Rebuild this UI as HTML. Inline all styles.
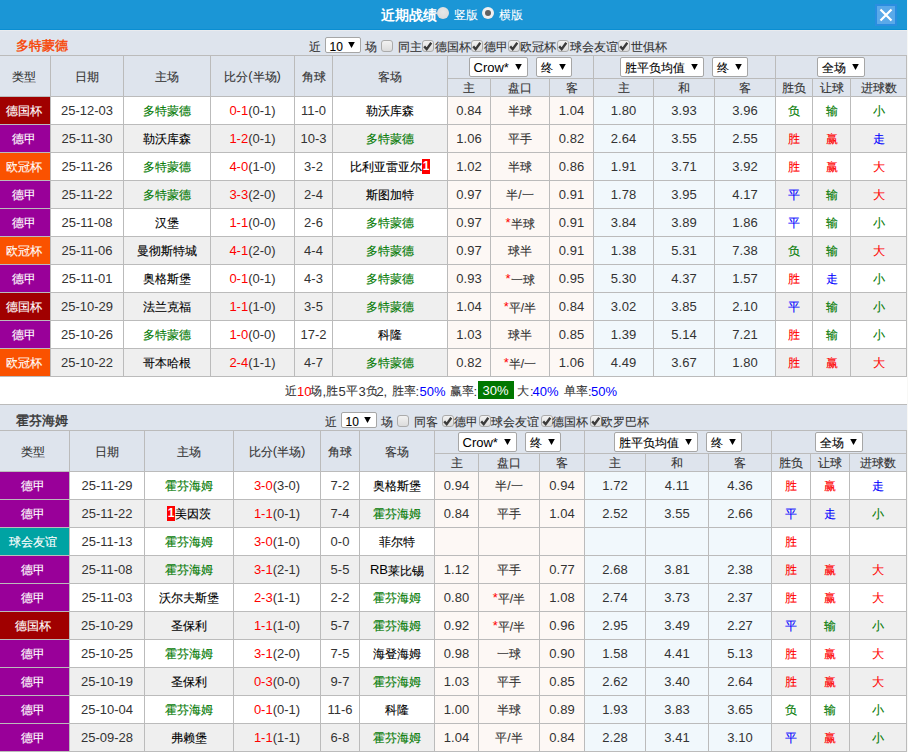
<!DOCTYPE html><html><head><meta charset="utf-8"><style>
*{margin:0;padding:0;box-sizing:border-box}
html,body{width:908px;height:752px;overflow:hidden;background:#dee4ed;font-family:"Liberation Sans",sans-serif;font-size:12px;color:#333;-webkit-text-stroke:0.1px currentColor}
.a{position:absolute}
.c{position:absolute;text-align:center;white-space:nowrap;overflow:hidden;padding-top:1px;-webkit-text-stroke:0.12px currentColor}
.n{font-size:13px;position:relative;top:-1px;-webkit-text-stroke:0}
.t,.ft{position:absolute;white-space:nowrap;line-height:14px;color:#333}
.title{-webkit-text-stroke:0.4px currentColor;position:absolute;font-size:13px;font-weight:normal;line-height:16px;white-space:nowrap}
.hdr{-webkit-text-stroke:0;position:absolute;color:#fff;font-size:14px;font-weight:bold;line-height:18px;white-space:nowrap}
.hdr2{position:absolute;color:#fff;font-size:12px;line-height:16px;white-space:nowrap}
.radio{position:absolute;width:12px;height:12px;border-radius:50%;background:radial-gradient(circle at 50% 40%,#e8e8e8 0,#dddddd 70%,#c0bab4 100%)}
.radio.on{background:radial-gradient(circle at 50% 45%,#f6f6f6 0,#eeeeee 65%,#c4c0bc 100%)}
.radio.on::after{content:"";position:absolute;left:3px;top:2.8px;width:6px;height:6px;border-radius:50%;background:#606060}
.close{position:absolute;width:22px;height:22px}
.cb{position:absolute;width:12px;height:12px;border:1px solid #ababab;border-radius:3px;background:linear-gradient(#f2f2f2,#dcdcdc)}
.cb svg{left:-1px!important;top:-1px!important}
.sel{position:absolute;background:#fff;border:1px solid #a6a6a6;border-radius:2px;color:#000}
.st{position:absolute;top:0;white-space:nowrap}
.st .n{font-size:13px;top:0}
.tri{position:absolute;line-height:0}
.bdg{display:inline-block;background:#f00;color:#fff;width:8px;height:15px;line-height:15px;font-weight:bold;text-align:center;vertical-align:middle;position:relative;top:-1px;-webkit-text-stroke:0}
.bdg .n{font-size:12px;top:0}
.sp{position:absolute;height:27px;line-height:27px;white-space:nowrap}
.sum{position:absolute;text-align:center;color:#333;white-space:nowrap}
.bl{color:#0000ff}
.gbox{display:inline-block;background:#007700;color:#fff;padding:0 4px;line-height:18px}
.gbox .n{font-size:14px}
</style></head><body><div class="a" style="left:0px;top:0px;width:907px;height:29px;background:#1b96d6;"></div>
<div class="a" style="left:0px;top:29px;width:907px;height:1px;background:#0a8ed2;"></div>
<div class="a" style="left:0px;top:30px;width:907px;height:1px;background:#e9ebef;"></div>
<div class="hdr" style="left:381px;top:6px;">近期战绩</div>
<div class="radio" style="left:437px;top:7px"></div>
<div class="hdr2" style="left:454px;top:7px;">竖版</div>
<div class="radio on" style="left:482px;top:7px"></div>
<div class="hdr2" style="left:499px;top:7px;">横版</div>
<div class="close" style="left:875px;top:4px"><svg width="22" height="22" viewBox="0 0 22 22"><rect x="0" y="0" width="22" height="22" fill="#2a8de0"/><rect x="2" y="2" width="18" height="18" fill="#5aa9e9"/><path d="M5.5 5.5 L16.5 16.5 M16.5 5.5 L5.5 16.5" stroke="#fff" stroke-width="2.2"/></svg></div>
<div class="title" style="left:16px;top:38px;color:#f84200">多特蒙德</div>
<div class="ft" style="left:309px;top:40px;">近</div>
<div class="sel" style="left:325px;top:37px;width:36px;height:16px;"><div class="st" style="left:3.5px;top:1.5px;line-height:14px;font-size:12px">10</div><div class="tri" style="right:5px;top:4px"><svg width="7" height="6" viewBox="0 0 7 6"><path d="M0.2 0 L6.8 0 L3.5 6 Z" fill="#000"/></svg></div></div>
<div class="ft" style="left:365px;top:40px;">场</div>
<div class="cb" style="left:381px;top:40px"></div>
<div class="ft" style="left:398px;top:40px;">同主</div>
<div class="cb" style="left:422px;top:40px"><svg width="12" height="12" viewBox="0 0 12 12" style="position:absolute;left:0;top:0"><path d="M2.2 6.4 L4.7 9.2 L9.3 2.8" stroke="#3a3a3a" stroke-width="2.4" fill="none"/></svg></div>
<div class="ft" style="left:435px;top:40px;">德国杯</div>
<div class="cb" style="left:471px;top:40px"><svg width="12" height="12" viewBox="0 0 12 12" style="position:absolute;left:0;top:0"><path d="M2.2 6.4 L4.7 9.2 L9.3 2.8" stroke="#3a3a3a" stroke-width="2.4" fill="none"/></svg></div>
<div class="ft" style="left:484px;top:40px;">德甲</div>
<div class="cb" style="left:508px;top:40px"><svg width="12" height="12" viewBox="0 0 12 12" style="position:absolute;left:0;top:0"><path d="M2.2 6.4 L4.7 9.2 L9.3 2.8" stroke="#3a3a3a" stroke-width="2.4" fill="none"/></svg></div>
<div class="ft" style="left:520px;top:40px;">欧冠杯</div>
<div class="cb" style="left:557px;top:40px"><svg width="12" height="12" viewBox="0 0 12 12" style="position:absolute;left:0;top:0"><path d="M2.2 6.4 L4.7 9.2 L9.3 2.8" stroke="#3a3a3a" stroke-width="2.4" fill="none"/></svg></div>
<div class="ft" style="left:570px;top:40px;">球会友谊</div>
<div class="cb" style="left:618px;top:40px"><svg width="12" height="12" viewBox="0 0 12 12" style="position:absolute;left:0;top:0"><path d="M2.2 6.4 L4.7 9.2 L9.3 2.8" stroke="#3a3a3a" stroke-width="2.4" fill="none"/></svg></div>
<div class="ft" style="left:631px;top:40px;">世俱杯</div>
<div class="a" style="left:0px;top:55px;width:907px;height:322px;background:#bbbbbb;"></div>
<div class="c" style="left:0px;top:56px;width:50px;height:40px;line-height:40px;background:#dee4ed;color:#333;text-indent:-2px;">类型</div>
<div class="c" style="left:51px;top:56px;width:72px;height:40px;line-height:40px;background:#dee4ed;color:#333;">日期</div>
<div class="c" style="left:124px;top:56px;width:86px;height:40px;line-height:40px;background:#dee4ed;color:#333;">主场</div>
<div class="c" style="left:211px;top:56px;width:83px;height:40px;line-height:40px;background:#dee4ed;color:#333;">比分<span class="n">(</span>半场<span class="n">)</span></div>
<div class="c" style="left:295px;top:56px;width:37px;height:40px;line-height:40px;background:#dee4ed;color:#333;">角球</div>
<div class="c" style="left:333px;top:56px;width:114px;height:40px;line-height:40px;background:#dee4ed;color:#333;">客场</div>
<div class="c" style="left:448px;top:56px;width:145px;height:22px;line-height:22px;background:#dee4ed;"></div>
<div class="c" style="left:594px;top:56px;width:181px;height:22px;line-height:22px;background:#dee4ed;"></div>
<div class="c" style="left:776px;top:56px;width:130px;height:22px;line-height:22px;background:#dee4ed;"></div>
<div class="sel" style="left:469px;top:57px;width:59px;height:20px;"><div class="st" style="left:3.5px;top:1px;line-height:18px;font-size:12px"><span class="n">Crow*</span></div><div class="tri" style="right:5px;top:6px"><svg width="7" height="6" viewBox="0 0 7 6"><path d="M0.2 0 L6.8 0 L3.5 6 Z" fill="#000"/></svg></div></div>
<div class="sel" style="left:536px;top:57px;width:36px;height:20px;"><div class="st" style="left:3.5px;top:1px;line-height:18px;font-size:12px">终</div><div class="tri" style="right:5px;top:6px"><svg width="7" height="6" viewBox="0 0 7 6"><path d="M0.2 0 L6.8 0 L3.5 6 Z" fill="#000"/></svg></div></div>
<div class="sel" style="left:620px;top:57px;width:84px;height:20px;"><div class="st" style="left:3.5px;top:1px;line-height:18px;font-size:12px">胜平负均值</div><div class="tri" style="right:5px;top:6px"><svg width="7" height="6" viewBox="0 0 7 6"><path d="M0.2 0 L6.8 0 L3.5 6 Z" fill="#000"/></svg></div></div>
<div class="sel" style="left:712px;top:57px;width:36px;height:20px;"><div class="st" style="left:3.5px;top:1px;line-height:18px;font-size:12px">终</div><div class="tri" style="right:5px;top:6px"><svg width="7" height="6" viewBox="0 0 7 6"><path d="M0.2 0 L6.8 0 L3.5 6 Z" fill="#000"/></svg></div></div>
<div class="sel" style="left:817px;top:57px;width:48px;height:20px;"><div class="st" style="left:3.5px;top:1px;line-height:18px;font-size:12px">全场</div><div class="tri" style="right:5px;top:6px"><svg width="7" height="6" viewBox="0 0 7 6"><path d="M0.2 0 L6.8 0 L3.5 6 Z" fill="#000"/></svg></div></div>
<div class="c" style="left:448px;top:79px;width:42px;height:17px;line-height:17px;background:#dee4ed;color:#333;">主</div>
<div class="c" style="left:491px;top:79px;width:58px;height:17px;line-height:17px;background:#dee4ed;color:#333;">盘口</div>
<div class="c" style="left:550px;top:79px;width:43px;height:17px;line-height:17px;background:#dee4ed;color:#333;">客</div>
<div class="c" style="left:594px;top:79px;width:59px;height:17px;line-height:17px;background:#dee4ed;color:#333;">主</div>
<div class="c" style="left:654px;top:79px;width:60px;height:17px;line-height:17px;background:#dee4ed;color:#333;">和</div>
<div class="c" style="left:715px;top:79px;width:60px;height:17px;line-height:17px;background:#dee4ed;color:#333;">客</div>
<div class="c" style="left:776px;top:79px;width:36px;height:17px;line-height:17px;background:#dee4ed;color:#333;">胜负</div>
<div class="c" style="left:813px;top:79px;width:37px;height:17px;line-height:17px;background:#dee4ed;color:#333;">让球</div>
<div class="c" style="left:851px;top:79px;width:55px;height:17px;line-height:17px;background:#dee4ed;color:#333;">进球数</div>
<div class="c" style="left:0px;top:97px;width:50px;height:27px;line-height:27px;background:#a00000;color:#fff;text-indent:-2px;">德国杯</div>
<div class="c" style="left:51px;top:97px;width:72px;height:27px;line-height:27px;background:#ffffff;color:#333;"><span class="n">25-12-03</span></div>
<div class="c" style="left:124px;top:97px;width:86px;height:27px;line-height:27px;background:#ffffff;color:#000;"><span style="color:#007800">多特蒙德</span></div>
<div class="c" style="left:211px;top:97px;width:83px;height:27px;line-height:27px;background:#ffffff;color:#333;"><span style="color:#ff0000"><span class="n">0-1</span></span><span class="n">(0-1)</span></div>
<div class="c" style="left:295px;top:97px;width:37px;height:27px;line-height:27px;background:#ffffff;color:#333;"><span class="n">11-0</span></div>
<div class="c" style="left:333px;top:97px;width:114px;height:27px;line-height:27px;background:#ffffff;color:#000;">勒沃库森</div>
<div class="c" style="left:448px;top:97px;width:42px;height:27px;line-height:27px;background:#fdf8f5;color:#333;"><span class="n">0.84</span></div>
<div class="c" style="left:491px;top:97px;width:58px;height:27px;line-height:27px;background:#fdf8f5;color:#333;">半球</div>
<div class="c" style="left:550px;top:97px;width:43px;height:27px;line-height:27px;background:#fdf8f5;color:#333;"><span class="n">1.04</span></div>
<div class="c" style="left:594px;top:97px;width:59px;height:27px;line-height:27px;background:#f1f8fc;color:#333;"><span class="n">1.80</span></div>
<div class="c" style="left:654px;top:97px;width:60px;height:27px;line-height:27px;background:#f1f8fc;color:#333;"><span class="n">3.93</span></div>
<div class="c" style="left:715px;top:97px;width:60px;height:27px;line-height:27px;background:#f1f8fc;color:#333;"><span class="n">3.96</span></div>
<div class="c" style="left:776px;top:97px;width:36px;height:27px;line-height:27px;background:#ffffff;"><span style="color:#007800">负</span></div>
<div class="c" style="left:813px;top:97px;width:37px;height:27px;line-height:27px;background:#ffffff;"><span style="color:#007800">输</span></div>
<div class="c" style="left:851px;top:97px;width:55px;height:27px;line-height:27px;background:#ffffff;"><span style="color:#007800">小</span></div>
<div class="c" style="left:0px;top:125px;width:50px;height:27px;line-height:27px;background:#990099;color:#fff;text-indent:-2px;">德甲</div>
<div class="c" style="left:51px;top:125px;width:72px;height:27px;line-height:27px;background:#efefef;color:#333;"><span class="n">25-11-30</span></div>
<div class="c" style="left:124px;top:125px;width:86px;height:27px;line-height:27px;background:#efefef;color:#000;">勒沃库森</div>
<div class="c" style="left:211px;top:125px;width:83px;height:27px;line-height:27px;background:#efefef;color:#333;"><span style="color:#ff0000"><span class="n">1-2</span></span><span class="n">(0-1)</span></div>
<div class="c" style="left:295px;top:125px;width:37px;height:27px;line-height:27px;background:#efefef;color:#333;"><span class="n">10-3</span></div>
<div class="c" style="left:333px;top:125px;width:114px;height:27px;line-height:27px;background:#efefef;color:#000;"><span style="color:#007800">多特蒙德</span></div>
<div class="c" style="left:448px;top:125px;width:42px;height:27px;line-height:27px;background:#fdf8f5;color:#333;"><span class="n">1.06</span></div>
<div class="c" style="left:491px;top:125px;width:58px;height:27px;line-height:27px;background:#fdf8f5;color:#333;">平手</div>
<div class="c" style="left:550px;top:125px;width:43px;height:27px;line-height:27px;background:#fdf8f5;color:#333;"><span class="n">0.82</span></div>
<div class="c" style="left:594px;top:125px;width:59px;height:27px;line-height:27px;background:#f1f8fc;color:#333;"><span class="n">2.64</span></div>
<div class="c" style="left:654px;top:125px;width:60px;height:27px;line-height:27px;background:#f1f8fc;color:#333;"><span class="n">3.55</span></div>
<div class="c" style="left:715px;top:125px;width:60px;height:27px;line-height:27px;background:#f1f8fc;color:#333;"><span class="n">2.55</span></div>
<div class="c" style="left:776px;top:125px;width:36px;height:27px;line-height:27px;background:#efefef;"><span style="color:#ff0000">胜</span></div>
<div class="c" style="left:813px;top:125px;width:37px;height:27px;line-height:27px;background:#efefef;"><span style="color:#ff0000">赢</span></div>
<div class="c" style="left:851px;top:125px;width:55px;height:27px;line-height:27px;background:#efefef;"><span style="color:#0000ff">走</span></div>
<div class="c" style="left:0px;top:153px;width:50px;height:27px;line-height:27px;background:#fa5200;color:#fff;text-indent:-2px;">欧冠杯</div>
<div class="c" style="left:51px;top:153px;width:72px;height:27px;line-height:27px;background:#ffffff;color:#333;"><span class="n">25-11-26</span></div>
<div class="c" style="left:124px;top:153px;width:86px;height:27px;line-height:27px;background:#ffffff;color:#000;"><span style="color:#007800">多特蒙德</span></div>
<div class="c" style="left:211px;top:153px;width:83px;height:27px;line-height:27px;background:#ffffff;color:#333;"><span style="color:#ff0000"><span class="n">4-0</span></span><span class="n">(1-0)</span></div>
<div class="c" style="left:295px;top:153px;width:37px;height:27px;line-height:27px;background:#ffffff;color:#333;"><span class="n">3-2</span></div>
<div class="c" style="left:333px;top:153px;width:114px;height:27px;line-height:27px;background:#ffffff;color:#000;">比利亚雷亚尔<span class="bdg"><span class="n">1</span></span></div>
<div class="c" style="left:448px;top:153px;width:42px;height:27px;line-height:27px;background:#fdf8f5;color:#333;"><span class="n">1.02</span></div>
<div class="c" style="left:491px;top:153px;width:58px;height:27px;line-height:27px;background:#fdf8f5;color:#333;">半球</div>
<div class="c" style="left:550px;top:153px;width:43px;height:27px;line-height:27px;background:#fdf8f5;color:#333;"><span class="n">0.86</span></div>
<div class="c" style="left:594px;top:153px;width:59px;height:27px;line-height:27px;background:#f1f8fc;color:#333;"><span class="n">1.91</span></div>
<div class="c" style="left:654px;top:153px;width:60px;height:27px;line-height:27px;background:#f1f8fc;color:#333;"><span class="n">3.71</span></div>
<div class="c" style="left:715px;top:153px;width:60px;height:27px;line-height:27px;background:#f1f8fc;color:#333;"><span class="n">3.92</span></div>
<div class="c" style="left:776px;top:153px;width:36px;height:27px;line-height:27px;background:#ffffff;"><span style="color:#ff0000">胜</span></div>
<div class="c" style="left:813px;top:153px;width:37px;height:27px;line-height:27px;background:#ffffff;"><span style="color:#ff0000">赢</span></div>
<div class="c" style="left:851px;top:153px;width:55px;height:27px;line-height:27px;background:#ffffff;"><span style="color:#ff0000">大</span></div>
<div class="c" style="left:0px;top:181px;width:50px;height:27px;line-height:27px;background:#990099;color:#fff;text-indent:-2px;">德甲</div>
<div class="c" style="left:51px;top:181px;width:72px;height:27px;line-height:27px;background:#efefef;color:#333;"><span class="n">25-11-22</span></div>
<div class="c" style="left:124px;top:181px;width:86px;height:27px;line-height:27px;background:#efefef;color:#000;"><span style="color:#007800">多特蒙德</span></div>
<div class="c" style="left:211px;top:181px;width:83px;height:27px;line-height:27px;background:#efefef;color:#333;"><span style="color:#ff0000"><span class="n">3-3</span></span><span class="n">(2-0)</span></div>
<div class="c" style="left:295px;top:181px;width:37px;height:27px;line-height:27px;background:#efefef;color:#333;"><span class="n">2-4</span></div>
<div class="c" style="left:333px;top:181px;width:114px;height:27px;line-height:27px;background:#efefef;color:#000;">斯图加特</div>
<div class="c" style="left:448px;top:181px;width:42px;height:27px;line-height:27px;background:#fdf8f5;color:#333;"><span class="n">0.97</span></div>
<div class="c" style="left:491px;top:181px;width:58px;height:27px;line-height:27px;background:#fdf8f5;color:#333;">半/一</div>
<div class="c" style="left:550px;top:181px;width:43px;height:27px;line-height:27px;background:#fdf8f5;color:#333;"><span class="n">0.91</span></div>
<div class="c" style="left:594px;top:181px;width:59px;height:27px;line-height:27px;background:#f1f8fc;color:#333;"><span class="n">1.78</span></div>
<div class="c" style="left:654px;top:181px;width:60px;height:27px;line-height:27px;background:#f1f8fc;color:#333;"><span class="n">3.95</span></div>
<div class="c" style="left:715px;top:181px;width:60px;height:27px;line-height:27px;background:#f1f8fc;color:#333;"><span class="n">4.17</span></div>
<div class="c" style="left:776px;top:181px;width:36px;height:27px;line-height:27px;background:#efefef;"><span style="color:#0000ff">平</span></div>
<div class="c" style="left:813px;top:181px;width:37px;height:27px;line-height:27px;background:#efefef;"><span style="color:#007800">输</span></div>
<div class="c" style="left:851px;top:181px;width:55px;height:27px;line-height:27px;background:#efefef;"><span style="color:#ff0000">大</span></div>
<div class="c" style="left:0px;top:209px;width:50px;height:27px;line-height:27px;background:#990099;color:#fff;text-indent:-2px;">德甲</div>
<div class="c" style="left:51px;top:209px;width:72px;height:27px;line-height:27px;background:#ffffff;color:#333;"><span class="n">25-11-08</span></div>
<div class="c" style="left:124px;top:209px;width:86px;height:27px;line-height:27px;background:#ffffff;color:#000;">汉堡</div>
<div class="c" style="left:211px;top:209px;width:83px;height:27px;line-height:27px;background:#ffffff;color:#333;"><span style="color:#ff0000"><span class="n">1-1</span></span><span class="n">(0-0)</span></div>
<div class="c" style="left:295px;top:209px;width:37px;height:27px;line-height:27px;background:#ffffff;color:#333;"><span class="n">2-6</span></div>
<div class="c" style="left:333px;top:209px;width:114px;height:27px;line-height:27px;background:#ffffff;color:#000;"><span style="color:#007800">多特蒙德</span></div>
<div class="c" style="left:448px;top:209px;width:42px;height:27px;line-height:27px;background:#fdf8f5;color:#333;"><span class="n">0.97</span></div>
<div class="c" style="left:491px;top:209px;width:58px;height:27px;line-height:27px;background:#fdf8f5;color:#333;"><span style="color:#ff0000"><span class="n">*</span></span>半球</div>
<div class="c" style="left:550px;top:209px;width:43px;height:27px;line-height:27px;background:#fdf8f5;color:#333;"><span class="n">0.91</span></div>
<div class="c" style="left:594px;top:209px;width:59px;height:27px;line-height:27px;background:#f1f8fc;color:#333;"><span class="n">3.84</span></div>
<div class="c" style="left:654px;top:209px;width:60px;height:27px;line-height:27px;background:#f1f8fc;color:#333;"><span class="n">3.89</span></div>
<div class="c" style="left:715px;top:209px;width:60px;height:27px;line-height:27px;background:#f1f8fc;color:#333;"><span class="n">1.86</span></div>
<div class="c" style="left:776px;top:209px;width:36px;height:27px;line-height:27px;background:#ffffff;"><span style="color:#0000ff">平</span></div>
<div class="c" style="left:813px;top:209px;width:37px;height:27px;line-height:27px;background:#ffffff;"><span style="color:#007800">输</span></div>
<div class="c" style="left:851px;top:209px;width:55px;height:27px;line-height:27px;background:#ffffff;"><span style="color:#007800">小</span></div>
<div class="c" style="left:0px;top:237px;width:50px;height:27px;line-height:27px;background:#fa5200;color:#fff;text-indent:-2px;">欧冠杯</div>
<div class="c" style="left:51px;top:237px;width:72px;height:27px;line-height:27px;background:#efefef;color:#333;"><span class="n">25-11-06</span></div>
<div class="c" style="left:124px;top:237px;width:86px;height:27px;line-height:27px;background:#efefef;color:#000;">曼彻斯特城</div>
<div class="c" style="left:211px;top:237px;width:83px;height:27px;line-height:27px;background:#efefef;color:#333;"><span style="color:#ff0000"><span class="n">4-1</span></span><span class="n">(2-0)</span></div>
<div class="c" style="left:295px;top:237px;width:37px;height:27px;line-height:27px;background:#efefef;color:#333;"><span class="n">4-4</span></div>
<div class="c" style="left:333px;top:237px;width:114px;height:27px;line-height:27px;background:#efefef;color:#000;"><span style="color:#007800">多特蒙德</span></div>
<div class="c" style="left:448px;top:237px;width:42px;height:27px;line-height:27px;background:#fdf8f5;color:#333;"><span class="n">0.97</span></div>
<div class="c" style="left:491px;top:237px;width:58px;height:27px;line-height:27px;background:#fdf8f5;color:#333;">球半</div>
<div class="c" style="left:550px;top:237px;width:43px;height:27px;line-height:27px;background:#fdf8f5;color:#333;"><span class="n">0.91</span></div>
<div class="c" style="left:594px;top:237px;width:59px;height:27px;line-height:27px;background:#f1f8fc;color:#333;"><span class="n">1.38</span></div>
<div class="c" style="left:654px;top:237px;width:60px;height:27px;line-height:27px;background:#f1f8fc;color:#333;"><span class="n">5.31</span></div>
<div class="c" style="left:715px;top:237px;width:60px;height:27px;line-height:27px;background:#f1f8fc;color:#333;"><span class="n">7.38</span></div>
<div class="c" style="left:776px;top:237px;width:36px;height:27px;line-height:27px;background:#efefef;"><span style="color:#007800">负</span></div>
<div class="c" style="left:813px;top:237px;width:37px;height:27px;line-height:27px;background:#efefef;"><span style="color:#007800">输</span></div>
<div class="c" style="left:851px;top:237px;width:55px;height:27px;line-height:27px;background:#efefef;"><span style="color:#ff0000">大</span></div>
<div class="c" style="left:0px;top:265px;width:50px;height:27px;line-height:27px;background:#990099;color:#fff;text-indent:-2px;">德甲</div>
<div class="c" style="left:51px;top:265px;width:72px;height:27px;line-height:27px;background:#ffffff;color:#333;"><span class="n">25-11-01</span></div>
<div class="c" style="left:124px;top:265px;width:86px;height:27px;line-height:27px;background:#ffffff;color:#000;">奥格斯堡</div>
<div class="c" style="left:211px;top:265px;width:83px;height:27px;line-height:27px;background:#ffffff;color:#333;"><span style="color:#ff0000"><span class="n">0-1</span></span><span class="n">(0-1)</span></div>
<div class="c" style="left:295px;top:265px;width:37px;height:27px;line-height:27px;background:#ffffff;color:#333;"><span class="n">4-3</span></div>
<div class="c" style="left:333px;top:265px;width:114px;height:27px;line-height:27px;background:#ffffff;color:#000;"><span style="color:#007800">多特蒙德</span></div>
<div class="c" style="left:448px;top:265px;width:42px;height:27px;line-height:27px;background:#fdf8f5;color:#333;"><span class="n">0.93</span></div>
<div class="c" style="left:491px;top:265px;width:58px;height:27px;line-height:27px;background:#fdf8f5;color:#333;"><span style="color:#ff0000"><span class="n">*</span></span>一球</div>
<div class="c" style="left:550px;top:265px;width:43px;height:27px;line-height:27px;background:#fdf8f5;color:#333;"><span class="n">0.95</span></div>
<div class="c" style="left:594px;top:265px;width:59px;height:27px;line-height:27px;background:#f1f8fc;color:#333;"><span class="n">5.30</span></div>
<div class="c" style="left:654px;top:265px;width:60px;height:27px;line-height:27px;background:#f1f8fc;color:#333;"><span class="n">4.37</span></div>
<div class="c" style="left:715px;top:265px;width:60px;height:27px;line-height:27px;background:#f1f8fc;color:#333;"><span class="n">1.57</span></div>
<div class="c" style="left:776px;top:265px;width:36px;height:27px;line-height:27px;background:#ffffff;"><span style="color:#ff0000">胜</span></div>
<div class="c" style="left:813px;top:265px;width:37px;height:27px;line-height:27px;background:#ffffff;"><span style="color:#0000ff">走</span></div>
<div class="c" style="left:851px;top:265px;width:55px;height:27px;line-height:27px;background:#ffffff;"><span style="color:#007800">小</span></div>
<div class="c" style="left:0px;top:293px;width:50px;height:27px;line-height:27px;background:#a00000;color:#fff;text-indent:-2px;">德国杯</div>
<div class="c" style="left:51px;top:293px;width:72px;height:27px;line-height:27px;background:#efefef;color:#333;"><span class="n">25-10-29</span></div>
<div class="c" style="left:124px;top:293px;width:86px;height:27px;line-height:27px;background:#efefef;color:#000;">法兰克福</div>
<div class="c" style="left:211px;top:293px;width:83px;height:27px;line-height:27px;background:#efefef;color:#333;"><span style="color:#ff0000"><span class="n">1-1</span></span><span class="n">(1-0)</span></div>
<div class="c" style="left:295px;top:293px;width:37px;height:27px;line-height:27px;background:#efefef;color:#333;"><span class="n">3-5</span></div>
<div class="c" style="left:333px;top:293px;width:114px;height:27px;line-height:27px;background:#efefef;color:#000;"><span style="color:#007800">多特蒙德</span></div>
<div class="c" style="left:448px;top:293px;width:42px;height:27px;line-height:27px;background:#fdf8f5;color:#333;"><span class="n">1.04</span></div>
<div class="c" style="left:491px;top:293px;width:58px;height:27px;line-height:27px;background:#fdf8f5;color:#333;"><span style="color:#ff0000"><span class="n">*</span></span>平/半</div>
<div class="c" style="left:550px;top:293px;width:43px;height:27px;line-height:27px;background:#fdf8f5;color:#333;"><span class="n">0.84</span></div>
<div class="c" style="left:594px;top:293px;width:59px;height:27px;line-height:27px;background:#f1f8fc;color:#333;"><span class="n">3.02</span></div>
<div class="c" style="left:654px;top:293px;width:60px;height:27px;line-height:27px;background:#f1f8fc;color:#333;"><span class="n">3.85</span></div>
<div class="c" style="left:715px;top:293px;width:60px;height:27px;line-height:27px;background:#f1f8fc;color:#333;"><span class="n">2.10</span></div>
<div class="c" style="left:776px;top:293px;width:36px;height:27px;line-height:27px;background:#efefef;"><span style="color:#0000ff">平</span></div>
<div class="c" style="left:813px;top:293px;width:37px;height:27px;line-height:27px;background:#efefef;"><span style="color:#007800">输</span></div>
<div class="c" style="left:851px;top:293px;width:55px;height:27px;line-height:27px;background:#efefef;"><span style="color:#007800">小</span></div>
<div class="c" style="left:0px;top:321px;width:50px;height:27px;line-height:27px;background:#990099;color:#fff;text-indent:-2px;">德甲</div>
<div class="c" style="left:51px;top:321px;width:72px;height:27px;line-height:27px;background:#ffffff;color:#333;"><span class="n">25-10-26</span></div>
<div class="c" style="left:124px;top:321px;width:86px;height:27px;line-height:27px;background:#ffffff;color:#000;"><span style="color:#007800">多特蒙德</span></div>
<div class="c" style="left:211px;top:321px;width:83px;height:27px;line-height:27px;background:#ffffff;color:#333;"><span style="color:#ff0000"><span class="n">1-0</span></span><span class="n">(0-0)</span></div>
<div class="c" style="left:295px;top:321px;width:37px;height:27px;line-height:27px;background:#ffffff;color:#333;"><span class="n">17-2</span></div>
<div class="c" style="left:333px;top:321px;width:114px;height:27px;line-height:27px;background:#ffffff;color:#000;">科隆</div>
<div class="c" style="left:448px;top:321px;width:42px;height:27px;line-height:27px;background:#fdf8f5;color:#333;"><span class="n">1.03</span></div>
<div class="c" style="left:491px;top:321px;width:58px;height:27px;line-height:27px;background:#fdf8f5;color:#333;">球半</div>
<div class="c" style="left:550px;top:321px;width:43px;height:27px;line-height:27px;background:#fdf8f5;color:#333;"><span class="n">0.85</span></div>
<div class="c" style="left:594px;top:321px;width:59px;height:27px;line-height:27px;background:#f1f8fc;color:#333;"><span class="n">1.39</span></div>
<div class="c" style="left:654px;top:321px;width:60px;height:27px;line-height:27px;background:#f1f8fc;color:#333;"><span class="n">5.14</span></div>
<div class="c" style="left:715px;top:321px;width:60px;height:27px;line-height:27px;background:#f1f8fc;color:#333;"><span class="n">7.21</span></div>
<div class="c" style="left:776px;top:321px;width:36px;height:27px;line-height:27px;background:#ffffff;"><span style="color:#ff0000">胜</span></div>
<div class="c" style="left:813px;top:321px;width:37px;height:27px;line-height:27px;background:#ffffff;"><span style="color:#007800">输</span></div>
<div class="c" style="left:851px;top:321px;width:55px;height:27px;line-height:27px;background:#ffffff;"><span style="color:#007800">小</span></div>
<div class="c" style="left:0px;top:349px;width:50px;height:27px;line-height:27px;background:#fa5200;color:#fff;text-indent:-2px;">欧冠杯</div>
<div class="c" style="left:51px;top:349px;width:72px;height:27px;line-height:27px;background:#efefef;color:#333;"><span class="n">25-10-22</span></div>
<div class="c" style="left:124px;top:349px;width:86px;height:27px;line-height:27px;background:#efefef;color:#000;">哥本哈根</div>
<div class="c" style="left:211px;top:349px;width:83px;height:27px;line-height:27px;background:#efefef;color:#333;"><span style="color:#ff0000"><span class="n">2-4</span></span><span class="n">(1-1)</span></div>
<div class="c" style="left:295px;top:349px;width:37px;height:27px;line-height:27px;background:#efefef;color:#333;"><span class="n">4-7</span></div>
<div class="c" style="left:333px;top:349px;width:114px;height:27px;line-height:27px;background:#efefef;color:#000;"><span style="color:#007800">多特蒙德</span></div>
<div class="c" style="left:448px;top:349px;width:42px;height:27px;line-height:27px;background:#fdf8f5;color:#333;"><span class="n">0.82</span></div>
<div class="c" style="left:491px;top:349px;width:58px;height:27px;line-height:27px;background:#fdf8f5;color:#333;"><span style="color:#ff0000"><span class="n">*</span></span>半/一</div>
<div class="c" style="left:550px;top:349px;width:43px;height:27px;line-height:27px;background:#fdf8f5;color:#333;"><span class="n">1.06</span></div>
<div class="c" style="left:594px;top:349px;width:59px;height:27px;line-height:27px;background:#f1f8fc;color:#333;"><span class="n">4.49</span></div>
<div class="c" style="left:654px;top:349px;width:60px;height:27px;line-height:27px;background:#f1f8fc;color:#333;"><span class="n">3.67</span></div>
<div class="c" style="left:715px;top:349px;width:60px;height:27px;line-height:27px;background:#f1f8fc;color:#333;"><span class="n">1.80</span></div>
<div class="c" style="left:776px;top:349px;width:36px;height:27px;line-height:27px;background:#efefef;"><span style="color:#ff0000">胜</span></div>
<div class="c" style="left:813px;top:349px;width:37px;height:27px;line-height:27px;background:#efefef;"><span style="color:#ff0000">赢</span></div>
<div class="c" style="left:851px;top:349px;width:55px;height:27px;line-height:27px;background:#efefef;"><span style="color:#ff0000">大</span></div>
<div class="a" style="left:0px;top:377px;width:907px;height:27px;background:#ffffff;"></div>
<div class="a" style="left:0px;top:404px;width:907px;height:1px;background:#bbbbbb;"></div>
<div class="sp" style="left:284.5px;top:378px;color:#333;font-size:12px;">近</div>
<div class="sp" style="left:297px;top:378px;color:#ff0000;font-size:13px;-webkit-text-stroke:0;">10</div>
<div class="sp" style="left:310px;top:378px;color:#333;font-size:12px;">场</div>
<div class="sp" style="left:322.5px;top:378px;color:#333;font-size:13px;-webkit-text-stroke:0;">,</div>
<div class="sp" style="left:326px;top:378px;color:#333;font-size:12px;">胜</div>
<div class="sp" style="left:338.5px;top:378px;color:#333;font-size:13px;-webkit-text-stroke:0;">5</div>
<div class="sp" style="left:345.5px;top:378px;color:#333;font-size:12px;">平</div>
<div class="sp" style="left:358.5px;top:378px;color:#333;font-size:13px;-webkit-text-stroke:0;">3</div>
<div class="sp" style="left:365.5px;top:378px;color:#333;font-size:12px;">负</div>
<div class="sp" style="left:376.5px;top:378px;color:#333;font-size:13px;-webkit-text-stroke:0;">2</div>
<div class="sp" style="left:383.5px;top:378px;color:#333;font-size:13px;-webkit-text-stroke:0;">,</div>
<div class="sp" style="left:391.5px;top:378px;color:#333;font-size:12px;">胜率</div>
<div class="sp" style="left:415.5px;top:378px;color:#333;font-size:13px;-webkit-text-stroke:0;">:</div>
<div class="sp" style="left:419.5px;top:378px;color:#0000ff;font-size:13px;-webkit-text-stroke:0;">50%</div>
<div class="sp" style="left:449.5px;top:378px;color:#333;font-size:12px;">赢率</div>
<div class="sp" style="left:473.5px;top:378px;color:#333;font-size:13px;-webkit-text-stroke:0;">:</div>
<div class="a" style="left:478px;top:381px;width:36px;height:18px;background:#007700;"></div>
<div class="sp" style="left:482.5px;top:377px;color:#fff;font-size:13px;-webkit-text-stroke:0">30%</div>
<div class="sp" style="left:517px;top:378px;color:#333;font-size:12px;">大</div>
<div class="sp" style="left:530px;top:378px;color:#333;font-size:13px;-webkit-text-stroke:0;">:</div>
<div class="sp" style="left:532.5px;top:378px;color:#0000ff;font-size:13px;-webkit-text-stroke:0;">40%</div>
<div class="sp" style="left:563.5px;top:378px;color:#333;font-size:12px;">单率</div>
<div class="sp" style="left:588px;top:378px;color:#333;font-size:13px;-webkit-text-stroke:0;">:</div>
<div class="sp" style="left:591px;top:378px;color:#0000ff;font-size:13px;-webkit-text-stroke:0;">50%</div>
<div class="a" style="left:907px;top:0px;width:1px;height:752px;background:#f8f8f6;"></div>
<div class="title" style="left:16px;top:413px;color:#333">霍芬海姆</div>
<div class="ft" style="left:325px;top:415px;">近</div>
<div class="sel" style="left:341px;top:412px;width:36px;height:16px;"><div class="st" style="left:3.5px;top:1.5px;line-height:14px;font-size:12px">10</div><div class="tri" style="right:5px;top:4px"><svg width="7" height="6" viewBox="0 0 7 6"><path d="M0.2 0 L6.8 0 L3.5 6 Z" fill="#000"/></svg></div></div>
<div class="ft" style="left:381px;top:415px;">场</div>
<div class="cb" style="left:397px;top:415px"></div>
<div class="ft" style="left:414px;top:415px;">同客</div>
<div class="cb" style="left:442px;top:415px"><svg width="12" height="12" viewBox="0 0 12 12" style="position:absolute;left:0;top:0"><path d="M2.2 6.4 L4.7 9.2 L9.3 2.8" stroke="#3a3a3a" stroke-width="2.4" fill="none"/></svg></div>
<div class="ft" style="left:454px;top:415px;">德甲</div>
<div class="cb" style="left:479px;top:415px"><svg width="12" height="12" viewBox="0 0 12 12" style="position:absolute;left:0;top:0"><path d="M2.2 6.4 L4.7 9.2 L9.3 2.8" stroke="#3a3a3a" stroke-width="2.4" fill="none"/></svg></div>
<div class="ft" style="left:491px;top:415px;">球会友谊</div>
<div class="cb" style="left:541px;top:415px"><svg width="12" height="12" viewBox="0 0 12 12" style="position:absolute;left:0;top:0"><path d="M2.2 6.4 L4.7 9.2 L9.3 2.8" stroke="#3a3a3a" stroke-width="2.4" fill="none"/></svg></div>
<div class="ft" style="left:552px;top:415px;">德国杯</div>
<div class="cb" style="left:590px;top:415px"><svg width="12" height="12" viewBox="0 0 12 12" style="position:absolute;left:0;top:0"><path d="M2.2 6.4 L4.7 9.2 L9.3 2.8" stroke="#3a3a3a" stroke-width="2.4" fill="none"/></svg></div>
<div class="ft" style="left:601px;top:415px;">欧罗巴杯</div>
<div class="a" style="left:0px;top:430px;width:907px;height:322px;background:#bbbbbb;"></div>
<div class="c" style="left:0px;top:431px;width:69px;height:40px;line-height:40px;background:#dee4ed;color:#333;text-indent:-4px;">类型</div>
<div class="c" style="left:70px;top:431px;width:74px;height:40px;line-height:40px;background:#dee4ed;color:#333;">日期</div>
<div class="c" style="left:145px;top:431px;width:88px;height:40px;line-height:40px;background:#dee4ed;color:#333;">主场</div>
<div class="c" style="left:234px;top:431px;width:86px;height:40px;line-height:40px;background:#dee4ed;color:#333;">比分<span class="n">(</span>半场<span class="n">)</span></div>
<div class="c" style="left:321px;top:431px;width:38px;height:40px;line-height:40px;background:#dee4ed;color:#333;">角球</div>
<div class="c" style="left:360px;top:431px;width:74px;height:40px;line-height:40px;background:#dee4ed;color:#333;">客场</div>
<div class="c" style="left:435px;top:431px;width:149px;height:22px;line-height:22px;background:#dee4ed;"></div>
<div class="c" style="left:585px;top:431px;width:186px;height:22px;line-height:22px;background:#dee4ed;"></div>
<div class="c" style="left:772px;top:431px;width:134px;height:22px;line-height:22px;background:#dee4ed;"></div>
<div class="sel" style="left:458px;top:432px;width:59px;height:20px;"><div class="st" style="left:3.5px;top:1px;line-height:18px;font-size:12px"><span class="n">Crow*</span></div><div class="tri" style="right:5px;top:6px"><svg width="7" height="6" viewBox="0 0 7 6"><path d="M0.2 0 L6.8 0 L3.5 6 Z" fill="#000"/></svg></div></div>
<div class="sel" style="left:525px;top:432px;width:36px;height:20px;"><div class="st" style="left:3.5px;top:1px;line-height:18px;font-size:12px">终</div><div class="tri" style="right:5px;top:6px"><svg width="7" height="6" viewBox="0 0 7 6"><path d="M0.2 0 L6.8 0 L3.5 6 Z" fill="#000"/></svg></div></div>
<div class="sel" style="left:614px;top:432px;width:84px;height:20px;"><div class="st" style="left:3.5px;top:1px;line-height:18px;font-size:12px">胜平负均值</div><div class="tri" style="right:5px;top:6px"><svg width="7" height="6" viewBox="0 0 7 6"><path d="M0.2 0 L6.8 0 L3.5 6 Z" fill="#000"/></svg></div></div>
<div class="sel" style="left:706px;top:432px;width:36px;height:20px;"><div class="st" style="left:3.5px;top:1px;line-height:18px;font-size:12px">终</div><div class="tri" style="right:5px;top:6px"><svg width="7" height="6" viewBox="0 0 7 6"><path d="M0.2 0 L6.8 0 L3.5 6 Z" fill="#000"/></svg></div></div>
<div class="sel" style="left:815px;top:432px;width:48px;height:20px;"><div class="st" style="left:3.5px;top:1px;line-height:18px;font-size:12px">全场</div><div class="tri" style="right:5px;top:6px"><svg width="7" height="6" viewBox="0 0 7 6"><path d="M0.2 0 L6.8 0 L3.5 6 Z" fill="#000"/></svg></div></div>
<div class="c" style="left:435px;top:454px;width:43px;height:17px;line-height:17px;background:#dee4ed;color:#333;">主</div>
<div class="c" style="left:479px;top:454px;width:60px;height:17px;line-height:17px;background:#dee4ed;color:#333;">盘口</div>
<div class="c" style="left:540px;top:454px;width:44px;height:17px;line-height:17px;background:#dee4ed;color:#333;">客</div>
<div class="c" style="left:585px;top:454px;width:60px;height:17px;line-height:17px;background:#dee4ed;color:#333;">主</div>
<div class="c" style="left:646px;top:454px;width:62px;height:17px;line-height:17px;background:#dee4ed;color:#333;">和</div>
<div class="c" style="left:709px;top:454px;width:62px;height:17px;line-height:17px;background:#dee4ed;color:#333;">客</div>
<div class="c" style="left:772px;top:454px;width:38px;height:17px;line-height:17px;background:#dee4ed;color:#333;">胜负</div>
<div class="c" style="left:811px;top:454px;width:38px;height:17px;line-height:17px;background:#dee4ed;color:#333;">让球</div>
<div class="c" style="left:850px;top:454px;width:56px;height:17px;line-height:17px;background:#dee4ed;color:#333;">进球数</div>
<div class="c" style="left:0px;top:472px;width:69px;height:27px;line-height:27px;background:#990099;color:#fff;text-indent:-4px;">德甲</div>
<div class="c" style="left:70px;top:472px;width:74px;height:27px;line-height:27px;background:#ffffff;color:#333;"><span class="n">25-11-29</span></div>
<div class="c" style="left:145px;top:472px;width:88px;height:27px;line-height:27px;background:#ffffff;color:#000;"><span style="color:#007800">霍芬海姆</span></div>
<div class="c" style="left:234px;top:472px;width:86px;height:27px;line-height:27px;background:#ffffff;color:#333;"><span style="color:#ff0000"><span class="n">3-0</span></span><span class="n">(3-0)</span></div>
<div class="c" style="left:321px;top:472px;width:38px;height:27px;line-height:27px;background:#ffffff;color:#333;"><span class="n">7-2</span></div>
<div class="c" style="left:360px;top:472px;width:74px;height:27px;line-height:27px;background:#ffffff;color:#000;">奥格斯堡</div>
<div class="c" style="left:435px;top:472px;width:43px;height:27px;line-height:27px;background:#fdf8f5;color:#333;"><span class="n">0.94</span></div>
<div class="c" style="left:479px;top:472px;width:60px;height:27px;line-height:27px;background:#fdf8f5;color:#333;">半/一</div>
<div class="c" style="left:540px;top:472px;width:44px;height:27px;line-height:27px;background:#fdf8f5;color:#333;"><span class="n">0.94</span></div>
<div class="c" style="left:585px;top:472px;width:60px;height:27px;line-height:27px;background:#f1f8fc;color:#333;"><span class="n">1.72</span></div>
<div class="c" style="left:646px;top:472px;width:62px;height:27px;line-height:27px;background:#f1f8fc;color:#333;"><span class="n">4.11</span></div>
<div class="c" style="left:709px;top:472px;width:62px;height:27px;line-height:27px;background:#f1f8fc;color:#333;"><span class="n">4.36</span></div>
<div class="c" style="left:772px;top:472px;width:38px;height:27px;line-height:27px;background:#ffffff;"><span style="color:#ff0000">胜</span></div>
<div class="c" style="left:811px;top:472px;width:38px;height:27px;line-height:27px;background:#ffffff;"><span style="color:#ff0000">赢</span></div>
<div class="c" style="left:850px;top:472px;width:56px;height:27px;line-height:27px;background:#ffffff;"><span style="color:#0000ff">走</span></div>
<div class="c" style="left:0px;top:500px;width:69px;height:27px;line-height:27px;background:#990099;color:#fff;text-indent:-4px;">德甲</div>
<div class="c" style="left:70px;top:500px;width:74px;height:27px;line-height:27px;background:#efefef;color:#333;"><span class="n">25-11-22</span></div>
<div class="c" style="left:145px;top:500px;width:88px;height:27px;line-height:27px;background:#efefef;color:#000;"><span class="bdg"><span class="n">1</span></span>美因茨</div>
<div class="c" style="left:234px;top:500px;width:86px;height:27px;line-height:27px;background:#efefef;color:#333;"><span style="color:#ff0000"><span class="n">1-1</span></span><span class="n">(0-1)</span></div>
<div class="c" style="left:321px;top:500px;width:38px;height:27px;line-height:27px;background:#efefef;color:#333;"><span class="n">7-4</span></div>
<div class="c" style="left:360px;top:500px;width:74px;height:27px;line-height:27px;background:#efefef;color:#000;"><span style="color:#007800">霍芬海姆</span></div>
<div class="c" style="left:435px;top:500px;width:43px;height:27px;line-height:27px;background:#fdf8f5;color:#333;"><span class="n">0.84</span></div>
<div class="c" style="left:479px;top:500px;width:60px;height:27px;line-height:27px;background:#fdf8f5;color:#333;">平手</div>
<div class="c" style="left:540px;top:500px;width:44px;height:27px;line-height:27px;background:#fdf8f5;color:#333;"><span class="n">1.04</span></div>
<div class="c" style="left:585px;top:500px;width:60px;height:27px;line-height:27px;background:#f1f8fc;color:#333;"><span class="n">2.52</span></div>
<div class="c" style="left:646px;top:500px;width:62px;height:27px;line-height:27px;background:#f1f8fc;color:#333;"><span class="n">3.55</span></div>
<div class="c" style="left:709px;top:500px;width:62px;height:27px;line-height:27px;background:#f1f8fc;color:#333;"><span class="n">2.66</span></div>
<div class="c" style="left:772px;top:500px;width:38px;height:27px;line-height:27px;background:#efefef;"><span style="color:#0000ff">平</span></div>
<div class="c" style="left:811px;top:500px;width:38px;height:27px;line-height:27px;background:#efefef;"><span style="color:#0000ff">走</span></div>
<div class="c" style="left:850px;top:500px;width:56px;height:27px;line-height:27px;background:#efefef;"><span style="color:#007800">小</span></div>
<div class="c" style="left:0px;top:528px;width:69px;height:27px;line-height:27px;background:#00a3a3;color:#fff;text-indent:-4px;">球会友谊</div>
<div class="c" style="left:70px;top:528px;width:74px;height:27px;line-height:27px;background:#ffffff;color:#333;"><span class="n">25-11-13</span></div>
<div class="c" style="left:145px;top:528px;width:88px;height:27px;line-height:27px;background:#ffffff;color:#000;"><span style="color:#007800">霍芬海姆</span></div>
<div class="c" style="left:234px;top:528px;width:86px;height:27px;line-height:27px;background:#ffffff;color:#333;"><span style="color:#ff0000"><span class="n">3-0</span></span><span class="n">(1-0)</span></div>
<div class="c" style="left:321px;top:528px;width:38px;height:27px;line-height:27px;background:#ffffff;color:#333;"><span class="n">0-0</span></div>
<div class="c" style="left:360px;top:528px;width:74px;height:27px;line-height:27px;background:#ffffff;color:#000;">菲尔特</div>
<div class="c" style="left:435px;top:528px;width:43px;height:27px;line-height:27px;background:#fdf8f5;color:#333;"></div>
<div class="c" style="left:479px;top:528px;width:60px;height:27px;line-height:27px;background:#fdf8f5;color:#333;"></div>
<div class="c" style="left:540px;top:528px;width:44px;height:27px;line-height:27px;background:#fdf8f5;color:#333;"></div>
<div class="c" style="left:585px;top:528px;width:60px;height:27px;line-height:27px;background:#f1f8fc;color:#333;"></div>
<div class="c" style="left:646px;top:528px;width:62px;height:27px;line-height:27px;background:#f1f8fc;color:#333;"></div>
<div class="c" style="left:709px;top:528px;width:62px;height:27px;line-height:27px;background:#f1f8fc;color:#333;"></div>
<div class="c" style="left:772px;top:528px;width:38px;height:27px;line-height:27px;background:#ffffff;"><span style="color:#ff0000">胜</span></div>
<div class="c" style="left:811px;top:528px;width:38px;height:27px;line-height:27px;background:#ffffff;"></div>
<div class="c" style="left:850px;top:528px;width:56px;height:27px;line-height:27px;background:#ffffff;"></div>
<div class="c" style="left:0px;top:556px;width:69px;height:27px;line-height:27px;background:#990099;color:#fff;text-indent:-4px;">德甲</div>
<div class="c" style="left:70px;top:556px;width:74px;height:27px;line-height:27px;background:#efefef;color:#333;"><span class="n">25-11-08</span></div>
<div class="c" style="left:145px;top:556px;width:88px;height:27px;line-height:27px;background:#efefef;color:#000;"><span style="color:#007800">霍芬海姆</span></div>
<div class="c" style="left:234px;top:556px;width:86px;height:27px;line-height:27px;background:#efefef;color:#333;"><span style="color:#ff0000"><span class="n">3-1</span></span><span class="n">(2-1)</span></div>
<div class="c" style="left:321px;top:556px;width:38px;height:27px;line-height:27px;background:#efefef;color:#333;"><span class="n">5-5</span></div>
<div class="c" style="left:360px;top:556px;width:74px;height:27px;line-height:27px;background:#efefef;color:#000;"><span class="n">RB</span>莱比锡</div>
<div class="c" style="left:435px;top:556px;width:43px;height:27px;line-height:27px;background:#fdf8f5;color:#333;"><span class="n">1.12</span></div>
<div class="c" style="left:479px;top:556px;width:60px;height:27px;line-height:27px;background:#fdf8f5;color:#333;">平手</div>
<div class="c" style="left:540px;top:556px;width:44px;height:27px;line-height:27px;background:#fdf8f5;color:#333;"><span class="n">0.77</span></div>
<div class="c" style="left:585px;top:556px;width:60px;height:27px;line-height:27px;background:#f1f8fc;color:#333;"><span class="n">2.68</span></div>
<div class="c" style="left:646px;top:556px;width:62px;height:27px;line-height:27px;background:#f1f8fc;color:#333;"><span class="n">3.81</span></div>
<div class="c" style="left:709px;top:556px;width:62px;height:27px;line-height:27px;background:#f1f8fc;color:#333;"><span class="n">2.38</span></div>
<div class="c" style="left:772px;top:556px;width:38px;height:27px;line-height:27px;background:#efefef;"><span style="color:#ff0000">胜</span></div>
<div class="c" style="left:811px;top:556px;width:38px;height:27px;line-height:27px;background:#efefef;"><span style="color:#ff0000">赢</span></div>
<div class="c" style="left:850px;top:556px;width:56px;height:27px;line-height:27px;background:#efefef;"><span style="color:#ff0000">大</span></div>
<div class="c" style="left:0px;top:584px;width:69px;height:27px;line-height:27px;background:#990099;color:#fff;text-indent:-4px;">德甲</div>
<div class="c" style="left:70px;top:584px;width:74px;height:27px;line-height:27px;background:#ffffff;color:#333;"><span class="n">25-11-03</span></div>
<div class="c" style="left:145px;top:584px;width:88px;height:27px;line-height:27px;background:#ffffff;color:#000;">沃尔夫斯堡</div>
<div class="c" style="left:234px;top:584px;width:86px;height:27px;line-height:27px;background:#ffffff;color:#333;"><span style="color:#ff0000"><span class="n">2-3</span></span><span class="n">(1-1)</span></div>
<div class="c" style="left:321px;top:584px;width:38px;height:27px;line-height:27px;background:#ffffff;color:#333;"><span class="n">2-2</span></div>
<div class="c" style="left:360px;top:584px;width:74px;height:27px;line-height:27px;background:#ffffff;color:#000;"><span style="color:#007800">霍芬海姆</span></div>
<div class="c" style="left:435px;top:584px;width:43px;height:27px;line-height:27px;background:#fdf8f5;color:#333;"><span class="n">0.80</span></div>
<div class="c" style="left:479px;top:584px;width:60px;height:27px;line-height:27px;background:#fdf8f5;color:#333;"><span style="color:#ff0000"><span class="n">*</span></span>平/半</div>
<div class="c" style="left:540px;top:584px;width:44px;height:27px;line-height:27px;background:#fdf8f5;color:#333;"><span class="n">1.08</span></div>
<div class="c" style="left:585px;top:584px;width:60px;height:27px;line-height:27px;background:#f1f8fc;color:#333;"><span class="n">2.74</span></div>
<div class="c" style="left:646px;top:584px;width:62px;height:27px;line-height:27px;background:#f1f8fc;color:#333;"><span class="n">3.73</span></div>
<div class="c" style="left:709px;top:584px;width:62px;height:27px;line-height:27px;background:#f1f8fc;color:#333;"><span class="n">2.37</span></div>
<div class="c" style="left:772px;top:584px;width:38px;height:27px;line-height:27px;background:#ffffff;"><span style="color:#ff0000">胜</span></div>
<div class="c" style="left:811px;top:584px;width:38px;height:27px;line-height:27px;background:#ffffff;"><span style="color:#ff0000">赢</span></div>
<div class="c" style="left:850px;top:584px;width:56px;height:27px;line-height:27px;background:#ffffff;"><span style="color:#ff0000">大</span></div>
<div class="c" style="left:0px;top:612px;width:69px;height:27px;line-height:27px;background:#a00000;color:#fff;text-indent:-4px;">德国杯</div>
<div class="c" style="left:70px;top:612px;width:74px;height:27px;line-height:27px;background:#efefef;color:#333;"><span class="n">25-10-29</span></div>
<div class="c" style="left:145px;top:612px;width:88px;height:27px;line-height:27px;background:#efefef;color:#000;">圣保利</div>
<div class="c" style="left:234px;top:612px;width:86px;height:27px;line-height:27px;background:#efefef;color:#333;"><span style="color:#ff0000"><span class="n">1-1</span></span><span class="n">(1-0)</span></div>
<div class="c" style="left:321px;top:612px;width:38px;height:27px;line-height:27px;background:#efefef;color:#333;"><span class="n">5-7</span></div>
<div class="c" style="left:360px;top:612px;width:74px;height:27px;line-height:27px;background:#efefef;color:#000;"><span style="color:#007800">霍芬海姆</span></div>
<div class="c" style="left:435px;top:612px;width:43px;height:27px;line-height:27px;background:#fdf8f5;color:#333;"><span class="n">0.92</span></div>
<div class="c" style="left:479px;top:612px;width:60px;height:27px;line-height:27px;background:#fdf8f5;color:#333;"><span style="color:#ff0000"><span class="n">*</span></span>平/半</div>
<div class="c" style="left:540px;top:612px;width:44px;height:27px;line-height:27px;background:#fdf8f5;color:#333;"><span class="n">0.96</span></div>
<div class="c" style="left:585px;top:612px;width:60px;height:27px;line-height:27px;background:#f1f8fc;color:#333;"><span class="n">2.95</span></div>
<div class="c" style="left:646px;top:612px;width:62px;height:27px;line-height:27px;background:#f1f8fc;color:#333;"><span class="n">3.49</span></div>
<div class="c" style="left:709px;top:612px;width:62px;height:27px;line-height:27px;background:#f1f8fc;color:#333;"><span class="n">2.27</span></div>
<div class="c" style="left:772px;top:612px;width:38px;height:27px;line-height:27px;background:#efefef;"><span style="color:#0000ff">平</span></div>
<div class="c" style="left:811px;top:612px;width:38px;height:27px;line-height:27px;background:#efefef;"><span style="color:#007800">输</span></div>
<div class="c" style="left:850px;top:612px;width:56px;height:27px;line-height:27px;background:#efefef;"><span style="color:#007800">小</span></div>
<div class="c" style="left:0px;top:640px;width:69px;height:27px;line-height:27px;background:#990099;color:#fff;text-indent:-4px;">德甲</div>
<div class="c" style="left:70px;top:640px;width:74px;height:27px;line-height:27px;background:#ffffff;color:#333;"><span class="n">25-10-25</span></div>
<div class="c" style="left:145px;top:640px;width:88px;height:27px;line-height:27px;background:#ffffff;color:#000;"><span style="color:#007800">霍芬海姆</span></div>
<div class="c" style="left:234px;top:640px;width:86px;height:27px;line-height:27px;background:#ffffff;color:#333;"><span style="color:#ff0000"><span class="n">3-1</span></span><span class="n">(2-0)</span></div>
<div class="c" style="left:321px;top:640px;width:38px;height:27px;line-height:27px;background:#ffffff;color:#333;"><span class="n">7-5</span></div>
<div class="c" style="left:360px;top:640px;width:74px;height:27px;line-height:27px;background:#ffffff;color:#000;">海登海姆</div>
<div class="c" style="left:435px;top:640px;width:43px;height:27px;line-height:27px;background:#fdf8f5;color:#333;"><span class="n">0.98</span></div>
<div class="c" style="left:479px;top:640px;width:60px;height:27px;line-height:27px;background:#fdf8f5;color:#333;">一球</div>
<div class="c" style="left:540px;top:640px;width:44px;height:27px;line-height:27px;background:#fdf8f5;color:#333;"><span class="n">0.90</span></div>
<div class="c" style="left:585px;top:640px;width:60px;height:27px;line-height:27px;background:#f1f8fc;color:#333;"><span class="n">1.58</span></div>
<div class="c" style="left:646px;top:640px;width:62px;height:27px;line-height:27px;background:#f1f8fc;color:#333;"><span class="n">4.41</span></div>
<div class="c" style="left:709px;top:640px;width:62px;height:27px;line-height:27px;background:#f1f8fc;color:#333;"><span class="n">5.13</span></div>
<div class="c" style="left:772px;top:640px;width:38px;height:27px;line-height:27px;background:#ffffff;"><span style="color:#ff0000">胜</span></div>
<div class="c" style="left:811px;top:640px;width:38px;height:27px;line-height:27px;background:#ffffff;"><span style="color:#ff0000">赢</span></div>
<div class="c" style="left:850px;top:640px;width:56px;height:27px;line-height:27px;background:#ffffff;"><span style="color:#ff0000">大</span></div>
<div class="c" style="left:0px;top:668px;width:69px;height:27px;line-height:27px;background:#990099;color:#fff;text-indent:-4px;">德甲</div>
<div class="c" style="left:70px;top:668px;width:74px;height:27px;line-height:27px;background:#efefef;color:#333;"><span class="n">25-10-19</span></div>
<div class="c" style="left:145px;top:668px;width:88px;height:27px;line-height:27px;background:#efefef;color:#000;">圣保利</div>
<div class="c" style="left:234px;top:668px;width:86px;height:27px;line-height:27px;background:#efefef;color:#333;"><span style="color:#ff0000"><span class="n">0-3</span></span><span class="n">(0-0)</span></div>
<div class="c" style="left:321px;top:668px;width:38px;height:27px;line-height:27px;background:#efefef;color:#333;"><span class="n">9-7</span></div>
<div class="c" style="left:360px;top:668px;width:74px;height:27px;line-height:27px;background:#efefef;color:#000;"><span style="color:#007800">霍芬海姆</span></div>
<div class="c" style="left:435px;top:668px;width:43px;height:27px;line-height:27px;background:#fdf8f5;color:#333;"><span class="n">1.03</span></div>
<div class="c" style="left:479px;top:668px;width:60px;height:27px;line-height:27px;background:#fdf8f5;color:#333;">平手</div>
<div class="c" style="left:540px;top:668px;width:44px;height:27px;line-height:27px;background:#fdf8f5;color:#333;"><span class="n">0.85</span></div>
<div class="c" style="left:585px;top:668px;width:60px;height:27px;line-height:27px;background:#f1f8fc;color:#333;"><span class="n">2.62</span></div>
<div class="c" style="left:646px;top:668px;width:62px;height:27px;line-height:27px;background:#f1f8fc;color:#333;"><span class="n">3.40</span></div>
<div class="c" style="left:709px;top:668px;width:62px;height:27px;line-height:27px;background:#f1f8fc;color:#333;"><span class="n">2.64</span></div>
<div class="c" style="left:772px;top:668px;width:38px;height:27px;line-height:27px;background:#efefef;"><span style="color:#ff0000">胜</span></div>
<div class="c" style="left:811px;top:668px;width:38px;height:27px;line-height:27px;background:#efefef;"><span style="color:#ff0000">赢</span></div>
<div class="c" style="left:850px;top:668px;width:56px;height:27px;line-height:27px;background:#efefef;"><span style="color:#ff0000">大</span></div>
<div class="c" style="left:0px;top:696px;width:69px;height:27px;line-height:27px;background:#990099;color:#fff;text-indent:-4px;">德甲</div>
<div class="c" style="left:70px;top:696px;width:74px;height:27px;line-height:27px;background:#ffffff;color:#333;"><span class="n">25-10-04</span></div>
<div class="c" style="left:145px;top:696px;width:88px;height:27px;line-height:27px;background:#ffffff;color:#000;"><span style="color:#007800">霍芬海姆</span></div>
<div class="c" style="left:234px;top:696px;width:86px;height:27px;line-height:27px;background:#ffffff;color:#333;"><span style="color:#ff0000"><span class="n">0-1</span></span><span class="n">(0-1)</span></div>
<div class="c" style="left:321px;top:696px;width:38px;height:27px;line-height:27px;background:#ffffff;color:#333;"><span class="n">11-6</span></div>
<div class="c" style="left:360px;top:696px;width:74px;height:27px;line-height:27px;background:#ffffff;color:#000;">科隆</div>
<div class="c" style="left:435px;top:696px;width:43px;height:27px;line-height:27px;background:#fdf8f5;color:#333;"><span class="n">1.00</span></div>
<div class="c" style="left:479px;top:696px;width:60px;height:27px;line-height:27px;background:#fdf8f5;color:#333;">半球</div>
<div class="c" style="left:540px;top:696px;width:44px;height:27px;line-height:27px;background:#fdf8f5;color:#333;"><span class="n">0.89</span></div>
<div class="c" style="left:585px;top:696px;width:60px;height:27px;line-height:27px;background:#f1f8fc;color:#333;"><span class="n">1.93</span></div>
<div class="c" style="left:646px;top:696px;width:62px;height:27px;line-height:27px;background:#f1f8fc;color:#333;"><span class="n">3.83</span></div>
<div class="c" style="left:709px;top:696px;width:62px;height:27px;line-height:27px;background:#f1f8fc;color:#333;"><span class="n">3.65</span></div>
<div class="c" style="left:772px;top:696px;width:38px;height:27px;line-height:27px;background:#ffffff;"><span style="color:#007800">负</span></div>
<div class="c" style="left:811px;top:696px;width:38px;height:27px;line-height:27px;background:#ffffff;"><span style="color:#007800">输</span></div>
<div class="c" style="left:850px;top:696px;width:56px;height:27px;line-height:27px;background:#ffffff;"><span style="color:#007800">小</span></div>
<div class="c" style="left:0px;top:724px;width:69px;height:27px;line-height:27px;background:#990099;color:#fff;text-indent:-4px;">德甲</div>
<div class="c" style="left:70px;top:724px;width:74px;height:27px;line-height:27px;background:#efefef;color:#333;"><span class="n">25-09-28</span></div>
<div class="c" style="left:145px;top:724px;width:88px;height:27px;line-height:27px;background:#efefef;color:#000;">弗赖堡</div>
<div class="c" style="left:234px;top:724px;width:86px;height:27px;line-height:27px;background:#efefef;color:#333;"><span style="color:#ff0000"><span class="n">1-1</span></span><span class="n">(1-1)</span></div>
<div class="c" style="left:321px;top:724px;width:38px;height:27px;line-height:27px;background:#efefef;color:#333;"><span class="n">6-8</span></div>
<div class="c" style="left:360px;top:724px;width:74px;height:27px;line-height:27px;background:#efefef;color:#000;"><span style="color:#007800">霍芬海姆</span></div>
<div class="c" style="left:435px;top:724px;width:43px;height:27px;line-height:27px;background:#fdf8f5;color:#333;"><span class="n">1.04</span></div>
<div class="c" style="left:479px;top:724px;width:60px;height:27px;line-height:27px;background:#fdf8f5;color:#333;">平/半</div>
<div class="c" style="left:540px;top:724px;width:44px;height:27px;line-height:27px;background:#fdf8f5;color:#333;"><span class="n">0.84</span></div>
<div class="c" style="left:585px;top:724px;width:60px;height:27px;line-height:27px;background:#f1f8fc;color:#333;"><span class="n">2.28</span></div>
<div class="c" style="left:646px;top:724px;width:62px;height:27px;line-height:27px;background:#f1f8fc;color:#333;"><span class="n">3.41</span></div>
<div class="c" style="left:709px;top:724px;width:62px;height:27px;line-height:27px;background:#f1f8fc;color:#333;"><span class="n">3.10</span></div>
<div class="c" style="left:772px;top:724px;width:38px;height:27px;line-height:27px;background:#efefef;"><span style="color:#0000ff">平</span></div>
<div class="c" style="left:811px;top:724px;width:38px;height:27px;line-height:27px;background:#efefef;"><span style="color:#ff0000">赢</span></div>
<div class="c" style="left:850px;top:724px;width:56px;height:27px;line-height:27px;background:#efefef;"><span style="color:#007800">小</span></div></body></html>
